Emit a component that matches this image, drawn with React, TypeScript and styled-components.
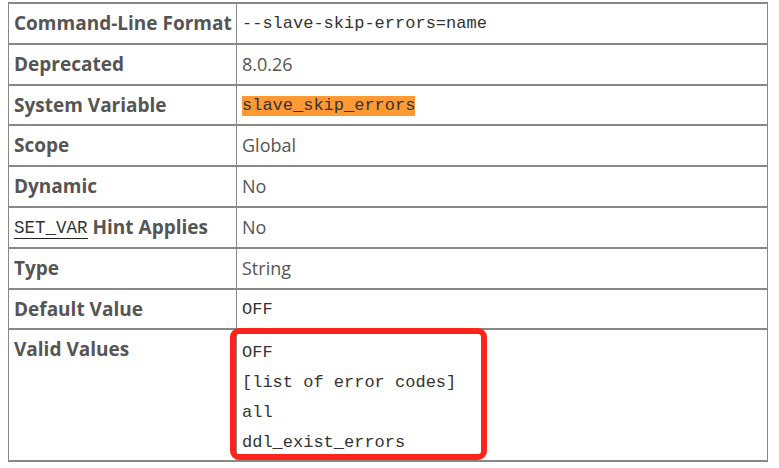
import React from "react";
import styled, { createGlobalStyle } from "styled-components";

const Global = createGlobalStyle`
  html, body { margin: 0; padding: 0; background: #fff; }
  body { font-family: "Open Sans", "Liberation Sans", sans-serif; }
`;

const Page = styled.div`
  padding: 2px 0 0 8px;
`;

const Frame = styled.div`
  position: relative;
  width: 760px;
`;

const Table = styled.table`
  width: 760px;
  border-collapse: collapse;
  table-layout: fixed;
`;

const Row = styled.tr``;

const Label = styled.th`
  width: 217px;
  height: 22.75px;
  text-align: left;
  vertical-align: top;
  padding: 8px 5px 8px 5px;
  line-height: 22.75px;
  font-size: 19px;
  font-weight: 700;
  color: #555;
  border-top: 2px solid #888;
  border-bottom: 2px solid #888;
  border-left: 1px solid #888;
  border-right: 1px solid #888;
  white-space: nowrap;
`;

const Value = styled.td<{ $list?: boolean }>`
  vertical-align: top;
  padding: ${(p) => (p.$list ? "7px 5px 3px 5px" : "8px 5px 8px 5px")};
  line-height: 22.75px;
  font-size: 18px;
  color: #555;
  border-top: 2px solid #888;
  border-bottom: 2px solid #888;
  border-left: 1px solid #888;
  border-right: 1px solid #888;
`;

const Code = styled.code<{ $hl?: boolean }>`
  font-family: "Liberation Mono", "Courier New", monospace;
  font-size: 17px;
  line-height: 20px;
  vertical-align: top;
  display: inline-block;
  margin-top: 2px;
  color: #333;
  background: ${(p) => (p.$hl ? "#ff9933" : "transparent")};
`;

const Linked = styled.code`
  font-family: "Liberation Mono", "Courier New", monospace;
  font-size: 17.5px;
  line-height: 20px;
  vertical-align: top;
  display: inline-block;
  margin-top: 2px;
  font-weight: 400;
  color: #333;
  border-bottom: 1px solid #222;
  margin-right: 5px;
`;

const ValueList = styled.div`
  display: flex;
  flex-direction: column;
`;

const ValueItem = styled.div`
  height: 30px;
  line-height: 30px;
  display: flex;
  align-items: center;
`;

const Callout = styled.div`
  position: absolute;
  left: 222px;
  top: 326px;
  width: 245px;
  height: 120px;
  border: 6px solid #ff2419;
  border-radius: 9px;
  pointer-events: none;
`;

const rows: { label: React.ReactNode; value: React.ReactNode }[] = [
  { label: "Command-Line Format", value: <Code>--slave-skip-errors=name</Code> },
  { label: "Deprecated", value: "8.0.26" },
  { label: "System Variable", value: <Code $hl>slave_skip_errors</Code> },
  { label: "Scope", value: "Global" },
  { label: "Dynamic", value: "No" },
  {
    label: (
      <>
        <Linked>SET_VAR</Linked>Hint Applies
      </>
    ),
    value: "No",
  },
  { label: "Type", value: "String" },
  { label: "Default Value", value: <Code>OFF</Code> },
];

const validValues = ["OFF", "[list of error codes]", "all", "ddl_exist_errors"];

export default function App() {
  return (
    <>
      <Global />
      <Page>
        <Frame>
          <Table>
            <tbody>
              {rows.map((r, i) => (
                <Row key={i}>
                  <Label>{r.label}</Label>
                  <Value>{r.value}</Value>
                </Row>
              ))}
              <Row>
                <Label>Valid Values</Label>
                <Value $list>
                  <ValueList>
                    {validValues.map((v) => (
                      <ValueItem key={v}>
                        <Code>{v}</Code>
                      </ValueItem>
                    ))}
                  </ValueList>
                </Value>
              </Row>
            </tbody>
          </Table>
          <Callout />
        </Frame>
      </Page>
    </>
  );
}
